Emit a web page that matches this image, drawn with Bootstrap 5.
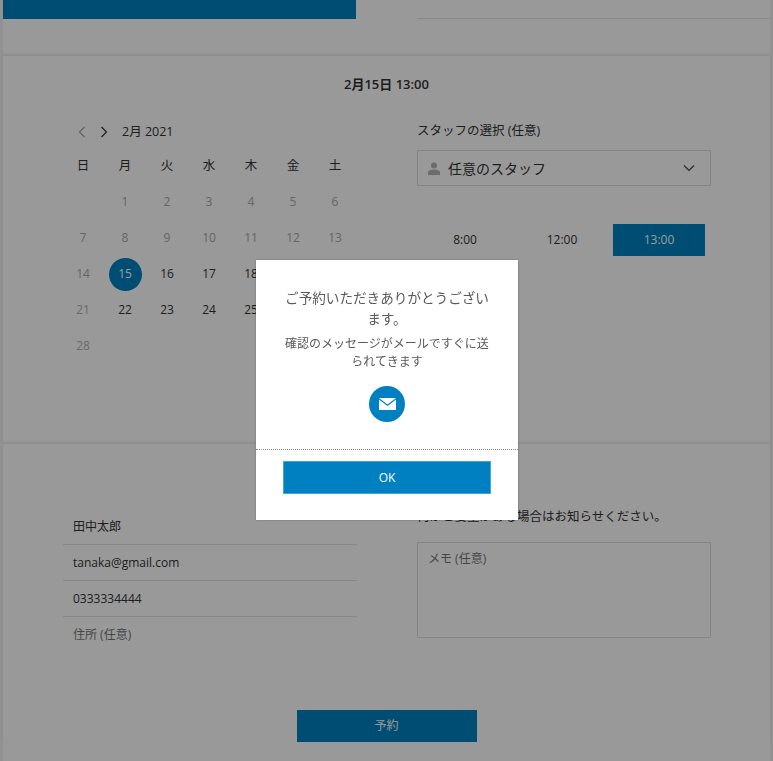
<!DOCTYPE html>
<html lang="ja">
<head>
    <meta charset="UTF-8">
    <meta name="viewport" content="width=device-width, initial-scale=1.0">
    <title>予約</title>
    <link rel="stylesheet" href="https://cdn.jsdelivr.net/npm/bootstrap@5.3.0/dist/css/bootstrap.min.css">
    <style>
        html, body { height: 761px; overflow: hidden; }
        body { background: #f2f2f2; font-family: "Open Sans", "Noto Sans CJK JP", sans-serif; font-size: 12px; color: #333; }
        .shell { margin: 0 3px; background: #fff; height: 761px; }
        .sect-top { height: 55px; display: grid; grid-template-columns: 353px 353px; column-gap: 61px; align-items: start; }
        .top-bar { height: 19px; background: #0080c0; }
        .top-line { height: 19px; border-bottom: 1px solid #e4e4e4; }
        .sect { border-top: 1px solid #ececec; box-shadow: 0 -1px 2px rgba(0,0,0,.08); }
        .sect-date { height: 388px; padding-top: 19px; }
        .date-title { font-size: 13px; font-weight: 600; line-height: 18px; }
        .two-up { display: grid; grid-template-columns: 293px 294px; column-gap: 60px; padding-left: 61px; }
        .cal-nav { height: 36px; padding-left: 13px; gap: 12px; margin-bottom: -2px; }
        .cal-nav svg { display: block; }
        .cal-month { margin-left: 1px; font-size: 12.5px; }
        .cal-grid { display: grid; grid-template-columns: repeat(7, 42px); grid-auto-rows: 36px; margin-left: -2px; }
        .cal-cell { display: flex; align-items: center; justify-content: center; font-size: 12px; }
        .cal-head { font-size: 12.5px; }
        .cal-off { color: #b0b0b0; }
        .cal-past { color: #a8a8a8; }
        .cal-pick { width: 33px; height: 33px; border-radius: 50%; background: #0080c0; color: #fff; display: flex; align-items: center; justify-content: center; }
        .staff-label { font-size: 12.5px; line-height: 18px; padding-top: 8px; margin-bottom: 10px; }
        .staff-select { height: 36px; border: 1px solid #ddd; padding: 0 15px 0 10px; font-size: 14px; }
        .staff-name { margin-left: 8px; }
        .time-grid { display: grid; grid-template-columns: repeat(3, 92px); column-gap: 5px; margin: 38px 0 0 2px; }
        .time-btn { height: 32px; border: 0; border-radius: 0; padding: 0; font-size: 12px; color: #333; background: transparent; }
        .time-on { background: #0080c0; color: #fff; }
        .tz-note { margin-top: 27px; gap: 6px; font-size: 12px; line-height: 18px; }
        .sect-form { padding-top: 64px; }
        .contact-list { margin-top: 1px; margin-left: -1px; }
        .contact-list .list-group-item { height: 36px; padding: 0 0 0 10px; line-height: 35px; font-size: 12px; color: #333; border-color: #e2e2e2; border-width: 0 0 1px; background: transparent; }
        .contact-empty { color: #767676 !important; }
        .memo-label { font-size: 12.5px; line-height: 18px; margin: 0 0 16px; }
        .memo-box { height: 96px; border: 1px solid #ddd; border-radius: 0; padding: 7px 10px; font-size: 12px; resize: none; box-shadow: none; }
        .memo-box::placeholder { color: #767676; opacity: 1; }
        .book-btn { display: block; width: 180px; height: 32px; margin: 57px auto 0; padding: 0; background: #0080c0; color: #fff; border: 0; border-radius: 0; font-size: 12px; }
        .modal-backdrop.show { opacity: .4; }
        .done-dialog { width: 262px; max-width: 262px; margin: 260px 0 0 256px; }
        .done-box { height: 260px; border: 0; border-radius: 0; color: #595959; box-shadow: 0 0 2px rgba(0,0,0,.3); }
        .done-body { height: 189px; padding: 27px 28px 0; }
        .done-title { font-size: 13.6px; line-height: 21px; margin: 0 0 6px; font-weight: 400; }
        .done-sub { font-size: 12px; line-height: 18px; margin: 0 0 15px; }
        .mail-dot { width: 36px; height: 36px; border-radius: 50%; background: #0080c0; }
        .done-foot { border-top: 1px dotted #8a8a8a; padding: 11px 27px 0; }
        .ok-btn { display: block; width: 100%; height: 33px; padding: 0; background: #0080c0; border: 1px solid #4aa3d3; border-radius: 0; color: #fff; font-size: 12px; }
    </style>
</head>
<body>
    <div class="shell">
        <div class="sect-top">
            <div class="top-bar"></div>
            <div class="top-line"></div>
        </div>

        <!-- 日付と時間 -->
        <div class="sect sect-date">
            <div class="date-title text-center">2月15日 13:00</div>
            <div class="two-up" style="margin-top:21px">
                <div>
                    <div class="cal-nav d-flex align-items-center">
                        <svg width="10" height="12" viewBox="0 0 10 12"><path d="M7.5 1 2.5 6l5 5" fill="none" stroke="#a3a3a3" stroke-width="1.2"/></svg>
                        <svg width="10" height="12" viewBox="0 0 10 12"><path d="M2.5 1l5 5-5 5" fill="none" stroke="#333" stroke-width="1.2"/></svg>
                        <span class="cal-month">2月 2021</span>
                    </div>
                    <div class="cal-grid" id="cal"></div>
                </div>
                <div>
                    <div class="staff-label">スタッフの選択 (任意)</div>
                    <div class="staff-select d-flex align-items-center">
                        <svg width="12" height="13" viewBox="0 0 12 13"><circle cx="6" cy="3.4" r="3" fill="#b5b5b5"/><path d="M0 13v-2.6C0 8.600 2.200 7.500 6 7.500s6 1.100 6 2.900V13z" fill="#b5b5b5"/></svg>
                        <span class="staff-name">任意のスタッフ</span>
                        <svg class="ms-auto" width="12" height="8" viewBox="0 0 12 8"><path d="M1 1.500l5 5 5-5" fill="none" stroke="#444" stroke-width="1.200"/></svg>
                    </div>
                    <div class="time-grid">
                        <button class="btn time-btn">8:00</button>
                        <button class="btn time-btn">12:00</button>
                        <button class="btn time-btn time-on">13:00</button>
                    </div>
                </div>
            </div>
            <div class="tz-note d-flex justify-content-center align-items-center">
                <svg width="11" height="11" viewBox="0 0 11 11"><circle cx="5.500" cy="5.500" r="4.900" fill="none" stroke="#5c8db0"/><path d="M5.500 4.800v3.400M5.500 2.600v1" stroke="#5c8db0"/></svg>
                <span>すべての時間は東京 (GMT+09:00) の時間です</span>
            </div>
        </div>

        <!-- お客様情報 -->
        <div class="sect sect-form">
            <div class="two-up">
                <div class="list-group list-group-flush contact-list">
                    <div class="list-group-item">田中太郎</div>
                    <div class="list-group-item">tanaka@gmail.com</div>
                    <div class="list-group-item">0333334444</div>
                    <div class="list-group-item contact-empty">住所 (任意)</div>
                </div>
                <div>
                    <p class="memo-label">何かご要望がある場合はお知らせください。</p>
                    <textarea class="form-control memo-box" placeholder="メモ (任意)"></textarea>
                </div>
            </div>
            <button class="btn book-btn">予約</button>
        </div>
    </div>

    <div class="modal-backdrop fade show"></div>
    <div class="modal fade show d-block" tabindex="-1">
        <div class="modal-dialog done-dialog">
            <div class="modal-content done-box">
                <div class="done-body text-center">
                    <h5 class="done-title">ご予約いただきありがとうございます。</h5>
                    <p class="done-sub">確認のメッセージがメールですぐに送られてきます</p>
                    <div class="mail-dot d-flex align-items-center justify-content-center mx-auto">
                        <svg width="17" height="12" viewBox="0 0 17 12"><path d="M0 0h17L8.500 6.500z" fill="#fff"/><path d="M0 1.600V12h17V1.600L8.500 8.100z" fill="#fff"/></svg>
                    </div>
                </div>
                <div class="done-foot">
                    <button class="btn ok-btn">OK</button>
                </div>
            </div>
        </div>
    </div>

    <script src="https://cdn.jsdelivr.net/npm/bootstrap@5.3.0/dist/js/bootstrap.bundle.min.js"></script>
    <script>
        let cal = document.getElementById("cal");
        let html = "";
        ["日", "月", "火", "水", "木", "金", "土"].forEach(d => {
            html += `<div class="cal-cell cal-head">${d}</div>`;
        });
        html += `<div class="cal-cell"></div>`;
        for (let day = 1; day <= 28; day++) {
            let cls = "";
            if (day < 15 || day % 7 === 0) cls = " cal-past";
            if (day === 21 || day === 28) cls = " cal-off";
            let inner = day === 15 ? `<span class="cal-pick">15</span>` : day;
            html += `<div class="cal-cell${cls}">${inner}</div>`;
        }
        cal.innerHTML = html;
    </script>
</body>
</html>
